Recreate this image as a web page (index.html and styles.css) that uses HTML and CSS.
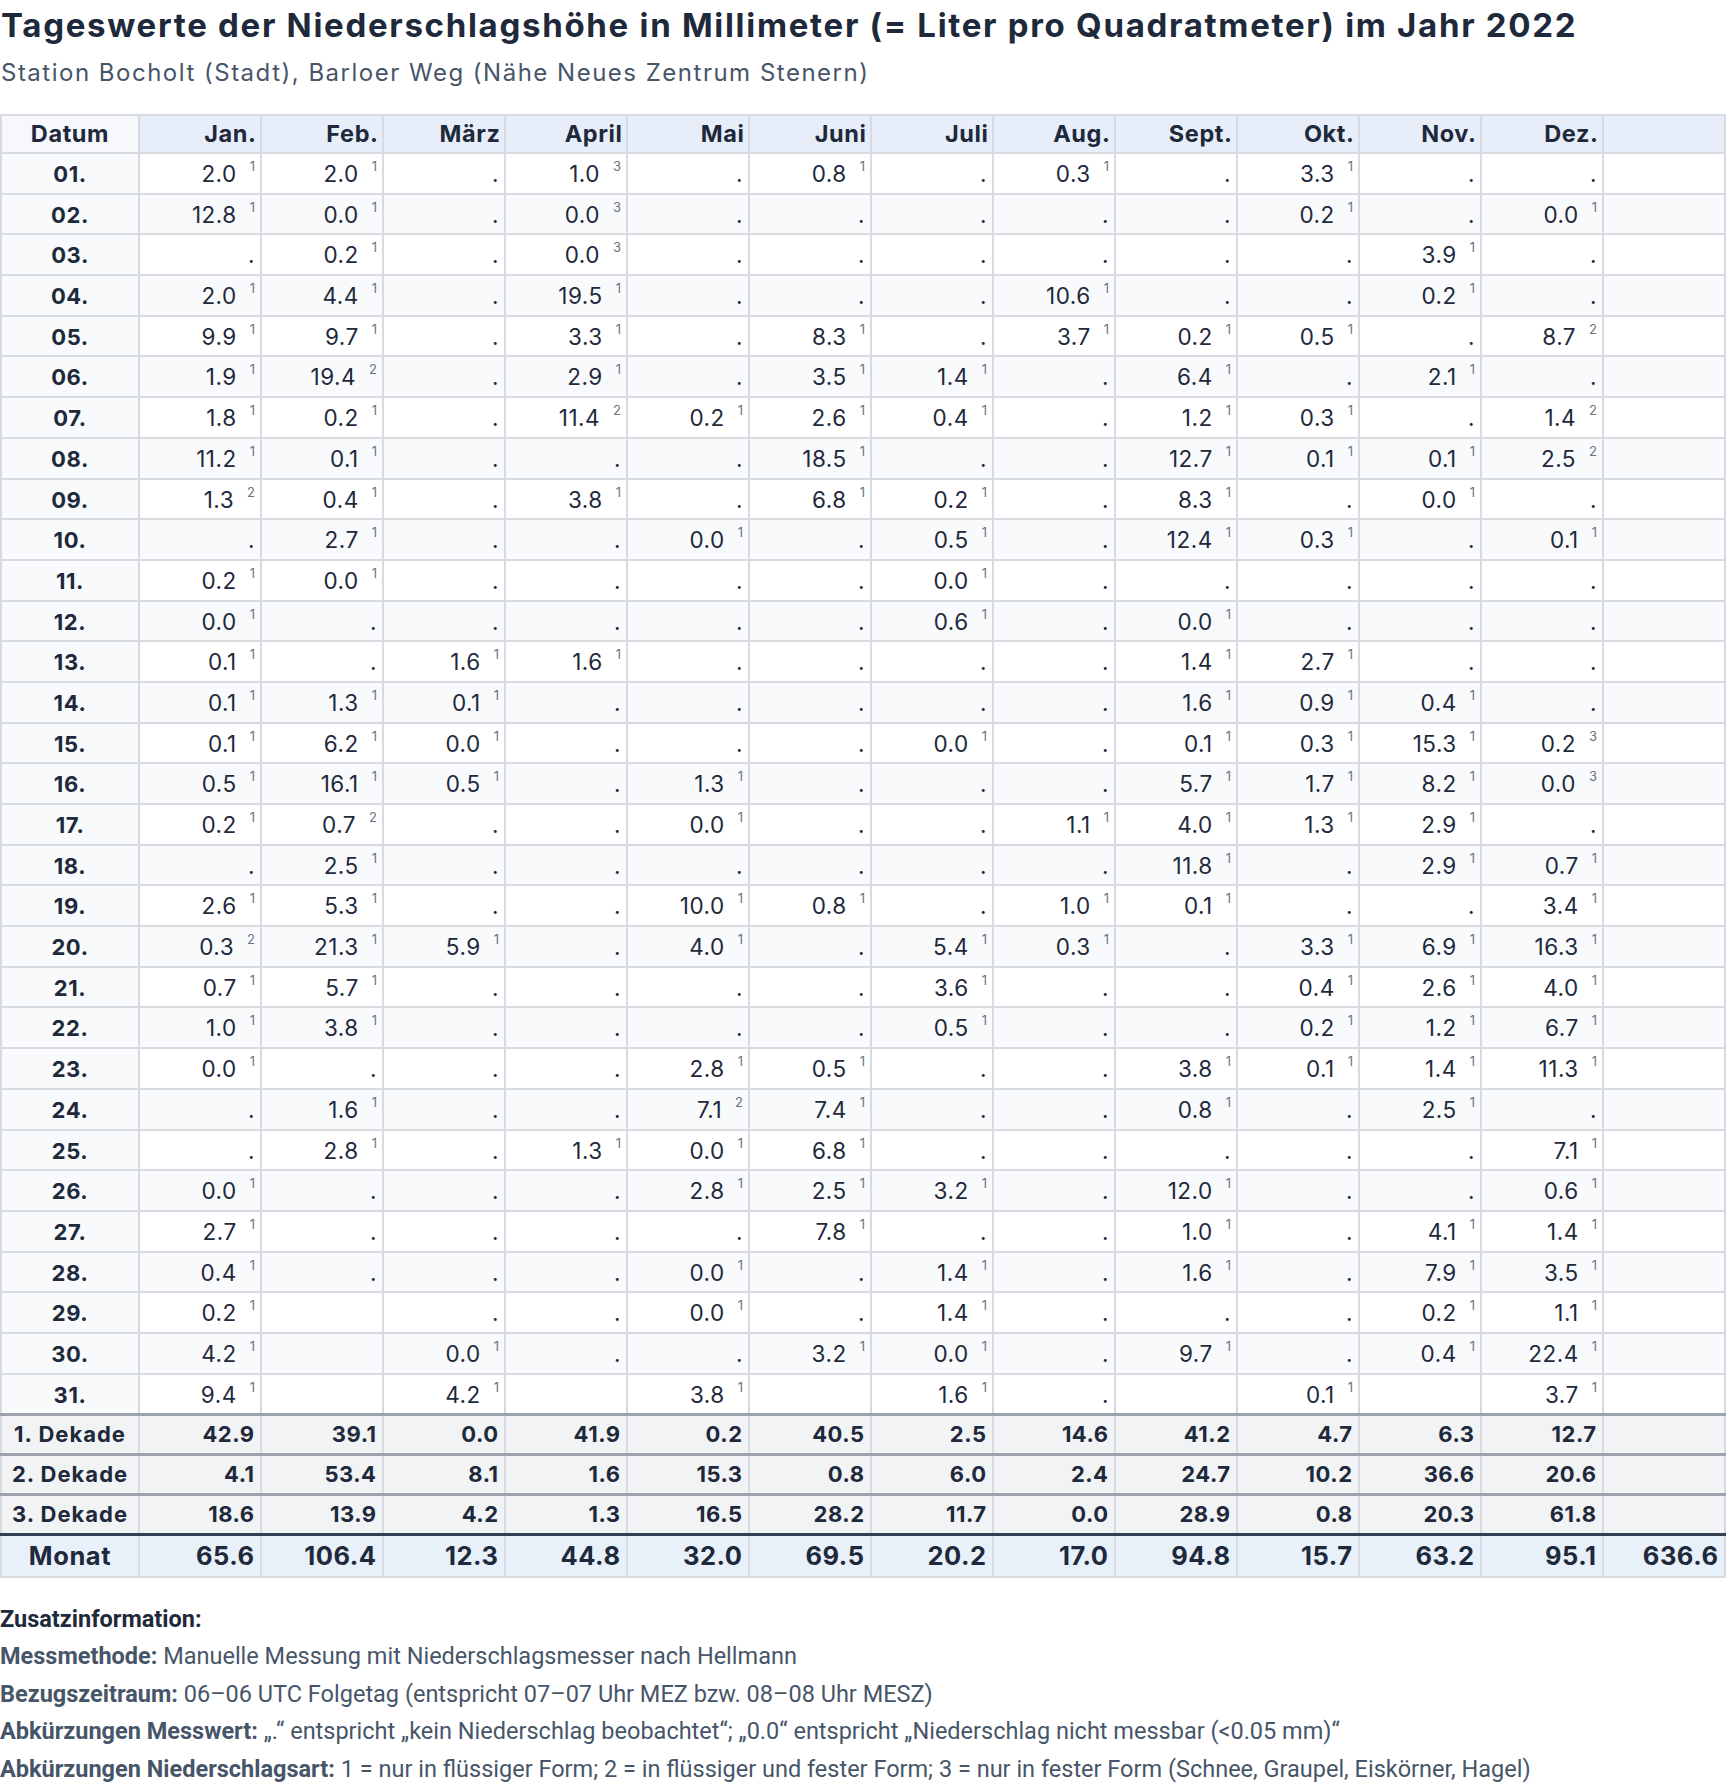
FILE: index.html
```html
<!DOCTYPE html>
<html lang="de">
<head>
<meta charset="utf-8">
<title>Tageswerte der Niederschlagshöhe 2022</title>
<link rel="stylesheet" href="styles.css">
</head>
<body>
<header class="head">
  <h1 class="title">Tageswerte der Niederschlagshöhe in Millimeter (= Liter pro Quadratmeter) im Jahr 2022</h1>
  <p class="subtitle">Station Bocholt (Stadt), Barloer Weg (Nähe Neues Zentrum Stenern)</p>
</header>
<table class="rain">
  <colgroup>
    <col class="c-date">
    <col class="c-m"><col class="c-m"><col class="c-m"><col class="c-m"><col class="c-m"><col class="c-m">
    <col class="c-m"><col class="c-m"><col class="c-m"><col class="c-m"><col class="c-m"><col class="c-m">
    <col>
  </colgroup>
  <thead>
    <tr>
      <th class="h-date">Datum</th>
      <th>Jan.</th><th>Feb.</th><th>März</th><th>April</th><th>Mai</th><th>Juni</th>
      <th>Juli</th><th>Aug.</th><th>Sept.</th><th>Okt.</th><th>Nov.</th><th>Dez.</th>
      <th></th>
    </tr>
  </thead>
  <tbody id="days"></tbody>
  <tbody>
    <tr class="dek">
      <td class="d">1. Dekade</td>
      <td>42.9</td><td>39.1</td><td>0.0</td><td>41.9</td><td>0.2</td><td>40.5</td>
      <td>2.5</td><td>14.6</td><td>41.2</td><td>4.7</td><td>6.3</td><td>12.7</td><td></td>
    </tr>
    <tr class="dek">
      <td class="d">2. Dekade</td>
      <td>4.1</td><td>53.4</td><td>8.1</td><td>1.6</td><td>15.3</td><td>0.8</td>
      <td>6.0</td><td>2.4</td><td>24.7</td><td>10.2</td><td>36.6</td><td>20.6</td><td></td>
    </tr>
    <tr class="dek">
      <td class="d">3. Dekade</td>
      <td>18.6</td><td>13.9</td><td>4.2</td><td>1.3</td><td>16.5</td><td>28.2</td>
      <td>11.7</td><td>0.0</td><td>28.9</td><td>0.8</td><td>20.3</td><td>61.8</td><td></td>
    </tr>
    <tr class="month">
      <td class="d">Monat</td>
      <td>65.6</td><td>106.4</td><td>12.3</td><td>44.8</td><td>32.0</td><td>69.5</td>
      <td>20.2</td><td>17.0</td><td>94.8</td><td>15.7</td><td>63.2</td><td>95.1</td><td>636.6</td>
    </tr>
  </tbody>
</table>
<section class="info">
  <p class="info-title">Zusatzinformation:</p>
  <p><b>Messmethode:</b> Manuelle Messung mit Niederschlagsmesser nach Hellmann</p>
  <p><b>Bezugszeitraum:</b> 06–06 UTC Folgetag (entspricht 07–07 Uhr MEZ bzw. 08–08 Uhr MESZ)</p>
  <p><b>Abkürzungen Messwert:</b> „.“ entspricht „kein Niederschlag beobachtet“; „0.0“ entspricht „Niederschlag nicht messbar (&lt;0.05 mm)“</p>
  <p><b>Abkürzungen Niederschlagsart:</b> 1 = nur in flüssiger Form; 2 = in flüssiger und fester Form; 3 = nur in fester Form (Schnee, Graupel, Eiskörner, Hagel)</p>
</section>
<script src="script.js"></script>
</body>
</html>
```

FILE: styles.css
```css
html {
  overflow: hidden;
}
body {
  margin: 0;
  background: #ffffff;
  color: #1e293b;
  font-family: Inter, "Noto Sans", sans-serif;
}
.head {
  padding: 5.5px 0 0 1px;
}
.title {
  margin: 0;
  font-size: 33px;
  line-height: 38px;
  font-weight: 700;
  letter-spacing: 1.7px;
  color: #1e293b;
}
.subtitle {
  margin: 15.5px 0 0;
  font-size: 24px;
  line-height: 28px;
  letter-spacing: 1.5px;
  color: #475569;
}
.rain {
  margin-top: 27px;
  width: 1726px;
  border-collapse: collapse;
  table-layout: fixed;
  font-size: 22.5px;
  letter-spacing: 0.5px;
}
.c-date { width: 138px; }
.c-m { width: 122px; }
.rain th,
.rain td {
  border: 2px solid #d7dbe1;
  text-align: right;
  white-space: nowrap;
}
.rain th {
  padding: 6px 3.5px 6px;
  line-height: 24px;
  font-size: 23.5px;
  letter-spacing: 0.6px;
  font-weight: 700;
  background: #e7eef9;
}
.rain th.h-date {
  text-align: center;
  background: #f6f8fb;
}
.rain td {
  padding: 8px 5px 6.7px;
  line-height: 24px;
}
#days tr:nth-child(even) td {
  background: #f9fafb;
}
.rain td.d {
  text-align: center;
  font-size: 22px;
  font-weight: 700;
  letter-spacing: 0.6px;
  background: #f8fafc;
}
.rain sup {
  font-size: 13px;
  line-height: 0;
  letter-spacing: 0;
  vertical-align: 11px;
  margin-left: 13px;
  color: #6b7280;
}
.rain tr.dek td {
  padding: 6px 5.5px 6px;
  line-height: 25px;
  font-size: 22px;
  font-weight: 700;
  background: #f1f3f5;
  border-top: 3px solid #9ca3af;
}
.rain tr.dek td.d {
  letter-spacing: 1px;
}
.rain tr.month td {
  padding: 5px 5.5px 5px;
  line-height: 30px;
  font-size: 25.5px;
  font-weight: 700;
  background: #e8f0fa;
  border-top: 3px solid #334155;
}
.info {
  margin-top: 22.5px;
  font-family: Roboto, "Noto Sans", sans-serif;
  font-size: 23.5px;
  line-height: 37.5px;
  color: #475569;
}
.info p {
  margin: 0;
}
.info b {
  font-weight: 700;
  color: #475569;
}
.info .info-title {
  font-weight: 700;
  color: #1e293b;
}
```

FILE: script.js
```js
var rows = [
  "2.0:1 2.0:1 . 1.0:3 . 0.8:1 . 0.3:1 . 3.3:1 . .",
  "12.8:1 0.0:1 . 0.0:3 . . . . . 0.2:1 . 0.0:1",
  ". 0.2:1 . 0.0:3 . . . . . . 3.9:1 .",
  "2.0:1 4.4:1 . 19.5:1 . . . 10.6:1 . . 0.2:1 .",
  "9.9:1 9.7:1 . 3.3:1 . 8.3:1 . 3.7:1 0.2:1 0.5:1 . 8.7:2",
  "1.9:1 19.4:2 . 2.9:1 . 3.5:1 1.4:1 . 6.4:1 . 2.1:1 .",
  "1.8:1 0.2:1 . 11.4:2 0.2:1 2.6:1 0.4:1 . 1.2:1 0.3:1 . 1.4:2",
  "11.2:1 0.1:1 . . . 18.5:1 . . 12.7:1 0.1:1 0.1:1 2.5:2",
  "1.3:2 0.4:1 . 3.8:1 . 6.8:1 0.2:1 . 8.3:1 . 0.0:1 .",
  ". 2.7:1 . . 0.0:1 . 0.5:1 . 12.4:1 0.3:1 . 0.1:1",
  "0.2:1 0.0:1 . . . . 0.0:1 . . . . .",
  "0.0:1 . . . . . 0.6:1 . 0.0:1 . . .",
  "0.1:1 . 1.6:1 1.6:1 . . . . 1.4:1 2.7:1 . .",
  "0.1:1 1.3:1 0.1:1 . . . . . 1.6:1 0.9:1 0.4:1 .",
  "0.1:1 6.2:1 0.0:1 . . . 0.0:1 . 0.1:1 0.3:1 15.3:1 0.2:3",
  "0.5:1 16.1:1 0.5:1 . 1.3:1 . . . 5.7:1 1.7:1 8.2:1 0.0:3",
  "0.2:1 0.7:2 . . 0.0:1 . . 1.1:1 4.0:1 1.3:1 2.9:1 .",
  ". 2.5:1 . . . . . . 11.8:1 . 2.9:1 0.7:1",
  "2.6:1 5.3:1 . . 10.0:1 0.8:1 . 1.0:1 0.1:1 . . 3.4:1",
  "0.3:2 21.3:1 5.9:1 . 4.0:1 . 5.4:1 0.3:1 . 3.3:1 6.9:1 16.3:1",
  "0.7:1 5.7:1 . . . . 3.6:1 . . 0.4:1 2.6:1 4.0:1",
  "1.0:1 3.8:1 . . . . 0.5:1 . . 0.2:1 1.2:1 6.7:1",
  "0.0:1 . . . 2.8:1 0.5:1 . . 3.8:1 0.1:1 1.4:1 11.3:1",
  ". 1.6:1 . . 7.1:2 7.4:1 . . 0.8:1 . 2.5:1 .",
  ". 2.8:1 . 1.3:1 0.0:1 6.8:1 . . . . . 7.1:1",
  "0.0:1 . . . 2.8:1 2.5:1 3.2:1 . 12.0:1 . . 0.6:1",
  "2.7:1 . . . . 7.8:1 . . 1.0:1 . 4.1:1 1.4:1",
  "0.4:1 . . . 0.0:1 . 1.4:1 . 1.6:1 . 7.9:1 3.5:1",
  "0.2:1 - . . 0.0:1 . 1.4:1 . . . 0.2:1 1.1:1",
  "4.2:1 - 0.0:1 . . 3.2:1 0.0:1 . 9.7:1 . 0.4:1 22.4:1",
  "9.4:1 - 4.2:1 - 3.8:1 - 1.6:1 . - 0.1:1 - 3.7:1"
];
var body = document.getElementById("days");
var html = "";
rows.forEach(function (r, i) {
  var day = (i + 1 < 10 ? "0" : "") + (i + 1) + ".";
  html += '<tr><td class="d">' + day + "</td>";
  r.split(" ").forEach(function (t) {
    if (t === "-") {
      html += "<td></td>";
    } else if (t === ".") {
      html += "<td>.</td>";
    } else {
      var p = t.split(":");
      html += "<td>" + p[0] + "<sup>" + p[1] + "</sup></td>";
    }
  });
  html += "<td></td></tr>";
});
body.innerHTML = html;
```
